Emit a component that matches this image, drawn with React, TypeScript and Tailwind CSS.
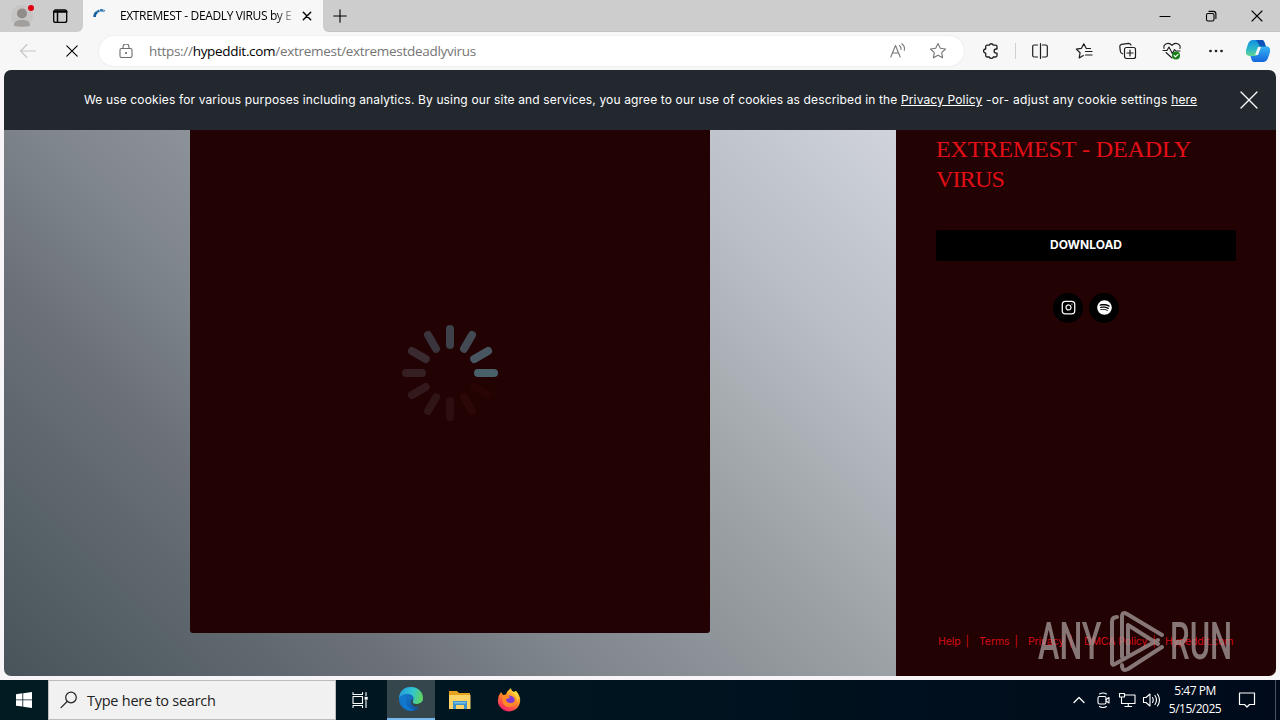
import React from "react";
import { FaSpotify } from "react-icons/fa";
import { FiInstagram } from "react-icons/fi";

interface SvgProps {
  size: number;
  className?: string;
  children: React.ReactNode;
}

const Icon: React.FC<SvgProps> = ({ size, className, children }) => (
  <svg
    width={size}
    height={size}
    viewBox={`0 0 ${size} ${size}`}
    fill="none"
    stroke="currentColor"
    strokeWidth="1.1"
    strokeLinecap="round"
    strokeLinejoin="round"
    className={`shrink-0 ${className ?? ""}`}
  >
    {children}
  </svg>
);

const TabStrip = () => (
  <div className="flex h-8 items-stretch bg-[#f7f7f7]">
    <div className="flex w-[83px] items-center rounded-br-md bg-[#cdcdcd] pl-[11px]">
      <Icon size={24} className="text-[#8e8a87]">
        <circle cx="11" cy="12" r="11" fill="#c6c5c4" stroke="none" />
        <circle cx="11" cy="9.500" r="5" fill="#908c89" stroke="none" />
        <path d="M3 22c0-5 3-6 8-6s8 1 8 6q-8 1.500-16 0z" fill="#a19e9b" stroke="none" />
        <circle cx="20" cy="4" r="3" fill="#e0000f" stroke="none" />
      </Icon>
      <Icon size={16} className="ml-[17px] text-black">
        <rect x="1.7" y="2" width="13" height="12.4" rx="2" strokeWidth="1.3" />
        <path d="M2 3.8h12.5" strokeWidth="2" />
        <path d="M5.500 5v9" strokeWidth="1.500" />
      </Icon>
    </div>
    <div className="flex w-[240px] items-center pl-[10px]">
      <Icon size={14}>
        <path d="M1.6 8A5.5 5.5 0 0 1 4 3.1" stroke="#1b5f9e" strokeWidth="2.6" strokeLinecap="butt" />
        <path d="M4 3.1A6 6 0 0 1 11.500 2.200" stroke="#2b73b0" strokeWidth="2.4" strokeDasharray="3 .5" strokeLinecap="butt" />
      </Icon>
      <div className="ml-[13px] w-[173px] overflow-hidden whitespace-nowrap bg-linear-to-r from-black from-88% to-[#c8c8c8] bg-clip-text font-['Open_Sans','Noto_Sans',sans-serif] text-[12px] tracking-[-0.37px] text-transparent">
        EXTREMEST - DEADLY VIRUS by E
      </div>
      <Icon size={10} className="ml-[9px] text-black">
        <path d="M1.3 1.3l7.4 7.4M8.7 1.3L1.3 8.7" strokeWidth="1.4" />
      </Icon>
    </div>
    <div className="flex flex-1 items-center rounded-bl-md border-b border-[#c3c3c3] bg-[#cdcdcd] pl-[10px] text-black">
      <Icon size={14}>
        <path d="M7 .7v12.6M.7 7h12.6" />
      </Icon>
      <Icon size={12} className="ml-auto">
        <path d="M1 6.5h10" />
      </Icon>
      <Icon size={12} className="ml-[34px]">
        <rect x="1.5" y="3.5" width="7.5" height="7.5" rx="1.5" />
        <path d="M4 1.4h4.3a2.6 2.6 0 0 1 2.6 2.6v4.5" />
      </Icon>
      <Icon size={12} className="ml-[34px] mr-[17px]">
        <path d="M1 1l10 10M11 1L1 11" />
      </Icon>
    </div>
  </div>
);

const Copilot = () => (
  <svg width="24" height="22" viewBox="0 0 24 22" className="shrink-0">
    <defs>
      <linearGradient id="copA" x1="0" y1="0" x2="0" y2="1">
        <stop offset="0" stopColor="#138fe0" />
        <stop offset=".55" stopColor="#29b7cb" />
        <stop offset="1" stopColor="#63d591" />
      </linearGradient>
      <linearGradient id="copB" x1="0" y1="0" x2="0" y2="1">
        <stop offset="0" stopColor="#36b6f4" />
        <stop offset="1" stopColor="#1566dd" />
      </linearGradient>
    </defs>
    <path d="M7 0h9q2 0 3 4l1 3h-5q-2 0-3 3l-2 6H4q-5 0-4-6l2-6Q3.500 0 7 0z" fill="url(#copA)" />
    <path d="M17 22H8q-2 0-3-4l-.5-2H9q2 0 3-3l2-7h5q6 0 5 6l-2 6q-1.500 4-5 4z" fill="url(#copB)" />
    <path d="M10 0h6q2 0 3 4l.8 2.500H14q-2.500-5-4-6.500z" fill="#0b52b8" />
    <path d="M12 7h3l-3 8H9z" fill="#f7f7f7" />
  </svg>
);

const Toolbar = () => (
  <div className="flex h-[38px] items-center bg-[#f7f7f7] text-[#1c1c1c]">
    <Icon size={16} className="ml-[20px] text-[#c5c5c5]">
      <path d="M15.500 8H.8M7 1.500L.6 8 7 14.500" />
    </Icon>
    <Icon size={12} className="ml-[30px] text-black">
      <path d="M.8.8l10.400 10.400M11.200.8L.8 11.200" />
    </Icon>
    <div className="ml-[21px] flex h-[30px] w-[865px] items-center rounded-full bg-white pl-[20px] shadow-[0_0_2px_#ddd]">
      <Icon size={14} className="-mt-px text-[#6d6d6d]">
        <rect x="1" y="4.500" width="12" height="9" rx="1.500" />
        <path d="M4 4.500V3a3 3 0 0 1 6 0v1.500" />
        <circle cx="7" cy="9" r=".5" fill="currentColor" />
      </Icon>
      <p className="ml-[16px] whitespace-nowrap font-['Open_Sans','Noto_Sans',sans-serif] text-[13.5px] tracking-[-0.3px] text-[#757575]">
        https://<span className="text-black">hypeddit.com</span>/extremest/extremestdeadlyvirus
      </p>
      <Icon size={16} className="ml-auto text-[#777]">
        <path d="M.8 14L5.500 2.500 10.200 14M2.500 10h6M9.500 2.500q2 1.500 1.500 4M11.800.8q3.500 2.500 2.500 6.500" />
      </Icon>
      <Icon size={18} className="ml-[23px] mr-[17px] text-[#777]">
        <path d="M9 1.500l2.300 4.800 5.200.7-3.800 3.600.9 5.200L9 13.300l-4.600 2.500.9-5.200L1.500 7l5.200-.7z" />
      </Icon>
    </div>
    <Icon size={18} className="ml-[18px]">
      <path d="M5 3.200h2.300a2.100 2.100 0 0 1 4 0h2.200q1.500 0 1.500 1.500v2.300h-.8a2.100 2.100 0 0 0 0 4.200h.8v2.300q0 1.500-1.500 1.500h-2.200a2.100 2.100 0 0 1-4 0H5q-1.300 0-1.300-1.500v-2.300a2.100 2.100 0 0 1 0-4.200V4.700q0-1.500 1.300-1.500z" strokeWidth="1.3" />
    </Icon>
    <div className="ml-[15px] h-[16px] w-px bg-[#d0d0d0]" />
    <Icon size={18} className="ml-[15px]">
      <path d="M6.500 3H3.200a1.500 1.500 0 0 0-1.500 1.500v9A1.500 1.500 0 0 0 3.200 15h3.300M11.500 3h3.300a1.500 1.500 0 0 1 1.500 1.500v9a1.500 1.500 0 0 1-1.500 1.500h-3.300M9.500 1.500v15" strokeWidth="1.2" />
    </Icon>
    <Icon size={18} className="ml-[26px]">
      <path d="M15.500 6.500h-4.200L8.800 1.800 6.500 6.300l-5.200.8 3.800 3.600-.9 5.200 4.100-2.400M10.500 9.500h6.500M10.500 13h6.500" strokeWidth="1.2" />
    </Icon>
    <Icon size={18} className="ml-[26px]">
      <rect x="5.500" y="5.500" width="11" height="11" rx="2" strokeWidth="1.2" />
      <path d="M11 8v6M8 11h6M3.500 11.800Q1.500 11 1.300 9L.8 4.500Q.8 2.800 2.500 2.300L9.500 1.300q1.700 0 2.500 1.800" strokeWidth="1.2" />
    </Icon>
    <Icon size={20} className="ml-[25px]">
      <path d="M2 7.500C1 3 6.500.5 10 4.300 13.500.5 19 3 18 7.500M4 11.500l6 5.500M1 9.500h4l2-3.500 3.300 6.500 2.200-4 1.200 1.500H18" strokeWidth="1.1" />
      <circle cx="14" cy="14.500" r="4" fill="#1a7e1a" stroke="none" />
      <path d="M12.200 14.500l1.300 1.300 2.500-2.500" stroke="white" />
    </Icon>
    <Icon size={16} className="ml-[26px]">
      <circle cx="2.500" cy="8" r=".8" fill="currentColor" />
      <circle cx="8" cy="8" r=".8" fill="currentColor" />
      <circle cx="13.500" cy="8" r=".8" fill="currentColor" />
    </Icon>
    <div className="ml-auto mr-[10px]">
      <Copilot />
    </div>
  </div>
);

const CookieBar = () => (
  <div className="flex h-[60px] items-center bg-[#23282f] text-white">
    <p className="ml-[80px] whitespace-nowrap font-[Inter,sans-serif] text-[12px] tracking-[0.14px]">
      We use cookies for various purposes including analytics. By using our site and services, you agree to our use of cookies as described in the{" "}
      <span className="underline">Privacy Policy</span>
      <span className="tracking-[0.28px]"> -or- adjust any cookie settings </span>
      <span className="underline">here</span>
    </p>
    <Icon size={18} className="ml-auto mr-[18px]">
      <path d="M1 1l16 16M17 1L1 17" strokeWidth="1.3" />
    </Icon>
  </div>
);

// colour of each spoke, clockwise from the top
const spokes = ["#3c414a", "#434a53", "#475660", "#48606a", "#280504", "#2c0809", "#2e0e10", "#301517", "#33191c", "#351f23", "#3a2b31", "#3a343c"];

const Spinner = () => (
  <svg width="100" height="100" viewBox="-50 -50 100 100">
    {spokes.map((color, i) => (
      <rect key={i} x="-4" y="-48" width="8" height="24" rx="4" fill={color} transform={`rotate(${i * 30})`} />
    ))}
  </svg>
);

const Watermark = () => (
  <div className="absolute left-[1038px] top-[609px] flex h-[64px] w-[196px] items-center font-[Roboto,sans-serif] text-[52px] font-medium leading-[64px] text-[#b3a7a7] opacity-70">
    <span className="mt-[1px] w-[64px] origin-left scale-x-[0.62]">ANY</span>
    <svg width="58" height="64" viewBox="0 0 58 64" className="ml-[6px] shrink-0" fill="none" stroke="currentColor" strokeWidth="4" strokeLinejoin="round" strokeLinecap="round">
      <path d="M9 8Q4 8 4 13V54q0 3 3 1L50 31M14 20V8q0-6 5-3L54 26M14 13V48M20 16L50 35M20 16v29M14 56q0 7 6 4L54 38" />
    </svg>
    <span className="ml-[4px] mt-[1px] w-[64px] origin-left scale-x-[0.6]">RUN</span>
  </div>
);

const links = [
  { label: "Help", width: "w-[41px]" },
  { label: "Terms", width: "w-[49px]" },
  { label: "Privacy", width: "w-[56px]" },
  { label: "DMCA Policy", width: "w-[81px]" },
  { label: "Hypeddit.com", width: "w-[72px]" },
];

const Sidebar = () => (
  <div className="flex w-[380px] flex-col bg-[#220203] px-[40px] text-[#e20f17]">
    <h1 className="mt-[4px] font-['Liberation_Serif',serif] text-[24px] leading-[30px] tracking-[-0.1px]">
      EXTREMEST - DEADLY
      <br />
      <span className="tracking-[-0.8px]">VIRUS</span>
    </h1>
    <button className="mt-[36px] h-[31px] rounded-[2px] bg-black pb-px font-[Inter,sans-serif] text-[12px] font-bold text-white">
      DOWNLOAD
    </button>
    <div className="mt-[32px] flex justify-center gap-[6px] text-white">
      <div className="flex size-[30px] items-center justify-center rounded-full bg-black pb-px">
        <FiInstagram size={15} />
      </div>
      <div className="flex size-[30px] items-center justify-center rounded-full bg-black pb-px">
        <FaSpotify size={15} />
      </div>
    </div>
    <div className="mb-[26px] ml-[2px] mt-auto flex whitespace-nowrap font-[Inter,sans-serif] text-[10.5px] leading-4 tracking-[-0.1px] text-[#d60c13]">
      {links.map((link, i) => (
        <div key={link.label} className={`${link.width} flex shrink-0 gap-[5px]`}>
          <span>{link.label}</span>
          {i < links.length - 1 && <span>|</span>}
        </div>
      ))}
    </div>
  </div>
);

const EdgeLogo = () => (
  <svg width="26" height="26" viewBox="0 0 26 26">
    <defs>
      <linearGradient id="edgeTop" x1="0" y1=".3" x2="1" y2=".5">
        <stop offset="0" stopColor="#239ddd" />
        <stop offset=".55" stopColor="#32c4cf" />
        <stop offset="1" stopColor="#61d45a" />
      </linearGradient>
      <linearGradient id="edgeLow" x1="0" y1="0" x2="1" y2="1">
        <stop offset="0" stopColor="#1687d8" />
        <stop offset="1" stopColor="#0f4e9d" />
      </linearGradient>
    </defs>
    <circle cx="13" cy="13" r="12" fill="url(#edgeLow)" />
    <path d="M1 12C2 4 7 1 13 1c8 0 12 6 12 11 0 4-3 6-6 6-4 0-5-1-4-3 2-4-1-7-5-7-5 0-8 2-9 4z" fill="url(#edgeTop)" />
    <path d="M10 8c-5 5-2 14 6 16-5 2-10-1-12-5C2 14 6 8 10 8z" fill="#1277ce" />
    <path d="M15 15c-1 2 0 3 4 3 2 0 4-1 5.500-2.500L26 19l-2 2c-5 2-11-1-11-5 0-2 1-3 2-3z" fill="#35474c" />
  </svg>
);

const FolderLogo = () => (
  <svg width="22" height="20" viewBox="0 0 22 20">
    <path d="M0 1h8l2 2h11v16H0z" fill="#e5a420" />
    <path d="M0 5h21.500v14H0z" fill="#fcd367" />
    <path d="M4 11h14v8h-3v-4H7v4H4z" fill="#3c94ca" />
    <path d="M5 12h12v1.500H5z" fill="#77c0e7" />
  </svg>
);

const FirefoxLogo = () => (
  <svg width="24" height="24" viewBox="0 0 24 24">
    <defs>
      <linearGradient id="fox" x1=".8" y1="0" x2=".25" y2="1">
        <stop offset="0" stopColor="#ffe43d" />
        <stop offset=".45" stopColor="#ff8d27" />
        <stop offset="1" stopColor="#f5156c" />
      </linearGradient>
    </defs>
    <path d="M4 4l2 3 3-.5Q10 3 14 0q0 3 3 4l2-1q5 5 4 11c-1 6-6 9.500-11 9.500S1 19 .8 13Q.7 8 4 4z" fill="url(#fox)" />
    <circle cx="12.500" cy="13" r="5.500" fill="#8138d0" />
    <path d="M5 8q5-2 8 1-1 2-4 2 0 4 5 4 4 0 4-5 2 6-2 8-7 3-10-3z" fill="#ff8a25" />
    <path d="M14 0q0 4 3 6 4 3 3 8 3-5-1-11l-2 1q-3-1-3-4z" fill="#ffd53d" />
  </svg>
);

const Taskbar = () => (
  <div className="flex h-10 items-center bg-linear-to-r from-[#001b22] via-[#001420] via-50% to-[#000a1a] text-white">
    <div className="flex h-full w-12 items-center justify-center">
      <svg width="16" height="16" viewBox="0 0 16 16" fill="white">
        <path d="M0 2.200L6.400 1.300V7.500H0zM7.200 1.200L16 0V7.500H7.200zM0 8.300h6.400v6.300L0 13.700zM7.200 8.300H16V16L7.200 14.700z" />
      </svg>
    </div>
    <div className="flex h-full w-[288px] items-center border border-[#bdbdbd] bg-[#f1f1f1] pl-[11px] text-[#222]">
      <Icon size={18}>
        <circle cx="11" cy="6.500" r="5.300" strokeWidth="1.2" />
        <path d="M7.200 10.500L1 16.700" strokeWidth="1.2" />
      </Icon>
      <span className="ml-[9px] mt-[2px] whitespace-nowrap font-['Open_Sans','Noto_Sans',sans-serif] text-[14.5px] tracking-[-0.25px]">Type here to search</span>
    </div>
    <div className="flex h-full w-[51px] items-center justify-center pr-[4px]">
      <Icon size={18}>
        <rect x="2" y="5.500" width="9.500" height="7" />
        <path d="M2 1.500v2h9.500v-2M2 16.500v-2h9.500v2M15 1.500v3M15 9.500v7" />
        <path d="M14 6h2.500v2.500H14z" fill="currentColor" strokeWidth=".4" />
      </Icon>
    </div>
    <div className="flex h-full w-12 items-center justify-center border-b-2 border-[#76b9ed] bg-[#35474c]">
      <EdgeLogo />
    </div>
    <div className="flex h-full w-[50px] items-center justify-center">
      <FolderLogo />
    </div>
    <div className="flex h-full w-12 items-center justify-center">
      <FirefoxLogo />
    </div>
    <Icon size={12} className="ml-auto">
      <path d="M1 8.500l5-5 5 5" strokeWidth="1.3" />
    </Icon>
    <Icon size={16} className="ml-[11px]">
      <rect x="2" y="4.500" width="8" height="7.500" rx="1.500" />
      <path d="M10 7.500l3-2v5.500l-3-2M3.500 2q3.500-2 7 0M3.500 14.500q3.500 2 7 0" />
    </Icon>
    <Icon size={18} className="ml-[6px]">
      <path d="M6.500 4H17v8.500H3.500V8M10.300 12.500v3M6.500 15.500h7.500M1.500 2.500h5v3.500h-5zM3.500 6v2" strokeLinecap="butt" />
    </Icon>
    <Icon size={18} className="ml-[6px]">
      <path d="M1.500 6.500h2.500l4-3.500v12l-4-3.500H1.500zM10.500 6.500q1.500 2.500 0 5M13 4.500q3 4.500 0 9M15.500 3q4 6 0 12" />
    </Icon>
    <div className="ml-[6px] w-[58px] whitespace-nowrap text-center font-['Open_Sans','Noto_Sans',sans-serif] text-[12px] leading-[18px] tracking-[-0.5px]">
      <p>5:47 PM</p>
      <p>5/15/2025</p>
    </div>
    <Icon size={18} className="ml-[14px]">
      <path d="M1.500 2h15v11.500h-5L9 16l-2.500-2.500h-5z" strokeWidth="1.2" />
    </Icon>
    <div className="ml-[19px] mr-[4px] h-full w-px bg-[#4b535e]" />
  </div>
);

export default function App() {
  return (
    <div className="relative flex h-[720px] w-[1280px] flex-col overflow-hidden bg-[#f7f5f7]">
      <TabStrip />
      <Toolbar />
      <div className="mx-[4px] mb-[4px] flex h-[606px] flex-col overflow-hidden rounded-[7px]">
        <CookieBar />
        <div className="flex flex-1">
          <div className="flex w-[892px] items-start justify-center bg-linear-[45deg,#49535a,#5a646a_15%,#6b7078_27%,#7e858b_40%,#9ba1a5_62%,#b9bfc5_82%,#d0d3dc]">
            <div className="flex h-[503px] w-[520px] items-center justify-center rounded-b-[3px] bg-[#220203] pb-[17px]">
              <Spinner />
            </div>
          </div>
          <Sidebar />
        </div>
      </div>
      <Taskbar />
      <Watermark />
    </div>
  );
}
